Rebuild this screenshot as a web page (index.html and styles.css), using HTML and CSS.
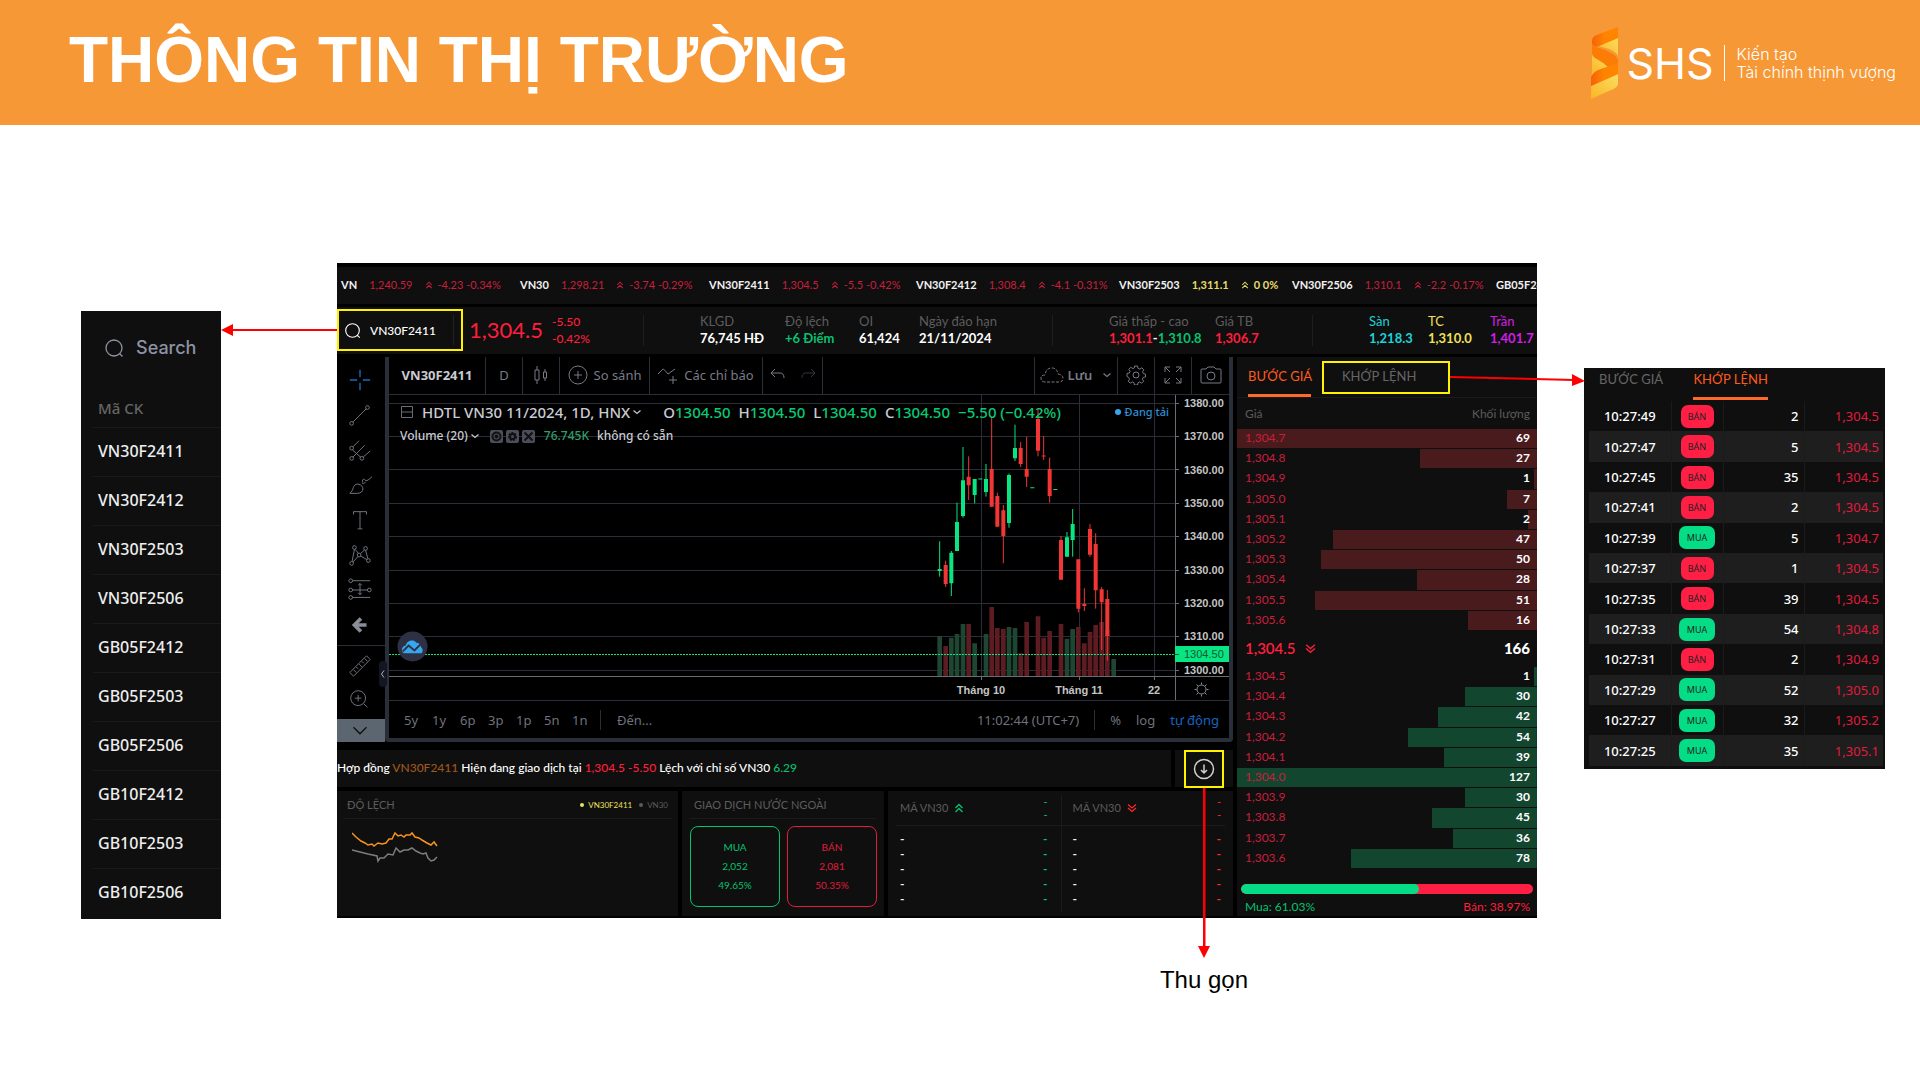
FILE: index.html
```html
<!DOCTYPE html>
<html lang="vi">
<head>
<meta charset="utf-8">
<title>Thông tin thị trường</title>
<meta name="viewport" content="width=device-width, initial-scale=1">
<link rel="stylesheet" href="styles.css">
</head>
<body>
<svg width="0" height="0" class="defs" aria-hidden="true">
  <symbol id="i-up" viewBox="0 0 10 10"><path d="M1.500 5L5 1.500L8.500 5M1.500 9L5 5.500L8.500 9" fill="none" stroke="currentColor" stroke-width="1.300"/></symbol>
  <symbol id="i-down" viewBox="0 0 10 10"><path d="M1 1.500L5 5L9 1.500M1 5L5 8.500L9 5" fill="none" stroke="currentColor" stroke-width="1.200"/></symbol>
  <symbol id="i-search" viewBox="0 0 20 20"><path d="M10 2a8 8 0 1 0 0 16a8 8 0 1 0 0-16M15.500 15.500L18.500 18.500" fill="none" stroke="currentColor" stroke-width="1.300"/></symbol>
  <symbol id="i-chev" viewBox="0 0 10 10"><path d="M1.500 3.500L5 6.500L8.500 3.500" fill="none" stroke="currentColor" stroke-width="1.200"/></symbol>
</svg>

<header class="banner">
  <h1>THÔNG TIN THỊ TRƯỜNG</h1>
  <div class="brand">
    <svg class="ribbon" viewBox="0 0 28 72" aria-hidden="true">
      <defs>
        <linearGradient id="g1" x1="0" x2="1"><stop offset="0" stop-color="#f4610a"/><stop offset=".5" stop-color="#ff8500"/></linearGradient>
        <linearGradient id="g2" x1="0" y1="1" x2="1" y2="0"><stop offset="0" stop-color="#fbb526"/><stop offset="1" stop-color="#fbdd5e"/></linearGradient>
      </defs>
      <path d="M8 19L27 11V29Q25 25 18 22Z" fill="url(#g2)"/>
      <path d="M1 27Q4 31 18 37L22 40L6 44Q2 46 1 50Z" fill="url(#g2)"/>
      <path d="M0 59L27 47V57Q26 61 20 63L0 72Z" fill="url(#g2)"/>
      <path d="M27 0V11L8 19Q2 21 1 17V14Q1 9 8 7Z" fill="url(#g1)"/>
      <path d="M1 16Q3 20 12 22L22 27Q28 31 27 36Q26 39 18 41Q12 35 4 31Q1 29 1 26Z" fill="#fb7d05"/>
      <path d="M0 59V51Q1 46 7 43L27 36V47Z" fill="url(#g1)"/>
    </svg>
    <span class="brand-name">SHS</span>
    <p class="brand-line">Kiến tạo<br>Tài chính thịnh vượng</p>
  </div>
</header>

<main class="stage">
  <aside class="symbols">
    <label class="find"><svg><use href="#i-search"/></svg><input type="text" placeholder="Search" aria-label="Search"></label>
    <table>
      <thead><tr><th>Mã CK</th></tr></thead>
      <tbody>
        <tr><td>VN30F2411</td></tr><tr><td>VN30F2412</td></tr><tr><td>VN30F2503</td></tr><tr><td>VN30F2506</td></tr>
        <tr><td>GB05F2412</td></tr><tr><td>GB05F2503</td></tr><tr><td>GB05F2506</td></tr>
        <tr><td>GB10F2412</td></tr><tr><td>GB10F2503</td></tr><tr><td>GB10F2506</td></tr>
      </tbody>
    </table>
  </aside>

  <section class="app">
    <div class="ticker">
      <div class="tick down"><b>VN</b><span>1,240.59</span><span><svg><use href="#i-up"/></svg>-4.23 -0.34%</span></div>
      <div class="tick down"><b>VN30</b><span>1,298.21</span><span><svg><use href="#i-up"/></svg>-3.74 -0.29%</span></div>
      <div class="tick down"><b>VN30F2411</b><span>1,304.5</span><span><svg><use href="#i-up"/></svg>-5.5 -0.42%</span></div>
      <div class="tick down"><b>VN30F2412</b><span>1,308.4</span><span><svg><use href="#i-up"/></svg>-4.1 -0.31%</span></div>
      <div class="tick flat"><b>VN30F2503</b><span>1,311.1</span><span><svg><use href="#i-up"/></svg>0 0%</span></div>
      <div class="tick down"><b>VN30F2506</b><span>1,310.1</span><span><svg><use href="#i-up"/></svg>-2.2 -0.17%</span></div>
      <div class="tick down"><b>GB05F2412</b></div>
    </div>

    <div class="quote">
      <div class="pick">
        <label class="pick-box"><svg><use href="#i-search"/></svg><input type="text" value="VN30F2411" aria-label="Mã hợp đồng"></label>
        <svg class="arrow-left" viewBox="0 0 116 12" aria-hidden="true"><path d="M10 5H116V7H10Z"/><path d="M0 6L12 0V12Z"/></svg>
      </div>
      <strong class="last">1,304.5</strong>
      <div class="pair red sm"><span>-5.50</span><span>-0.42%</span></div>
      <div class="pair rule"><span>KLGD</span><b>76,745 HĐ</b></div>
      <div class="pair green"><span>Độ lệch</span><b>+6 Điểm</b></div>
      <div class="pair"><span>OI</span><b>61,424</b></div>
      <div class="pair"><span>Ngày đáo hạn</span><b>21/11/2024</b></div>
      <div class="pair rule"><span>Giá thấp - cao</span><b><i class="c-red">1,301.1</i>-<i class="c-green">1,310.8</i></b></div>
      <div class="pair red"><span>Giá TB</span><b>1,306.7</b></div>
      <div class="pair rule cyan"><span>Sàn</span><b>1,218.3</b></div>
      <div class="pair yellow"><span>TC</span><b>1,310.0</b></div>
      <div class="pair violet"><span>Trần</span><b>1,401.7</b></div>
    </div>

    <div class="board">
      <div class="left">
        <div class="tv">
          <nav class="tools" aria-label="Công cụ vẽ">
            <button aria-label="Con trỏ"><svg class="blue" viewBox="0 0 28 28"><path d="M14 3v8M14 17v8M3 14h8M17 14h8"/></svg></button>
            <button aria-label="Đường xu hướng"><svg viewBox="0 0 28 28"><circle cx="5" cy="23" r="2"/><circle cx="22" cy="6" r="2"/><path d="M6.500 21.500L20.500 7.500"/></svg></button>
            <button aria-label="Gann"><svg viewBox="0 0 28 28"><circle cx="5" cy="12" r="2"/><circle cx="5" cy="23" r="2"/><circle cx="16" cy="23" r="2"/><path d="M6.500 10.500L13 4M6.500 21.500L19 9M17.500 21.500L25 15M6 14L15 22"/></svg></button>
            <button aria-label="Cọ vẽ"><svg viewBox="0 0 28 28"><path d="M3 23C8 20 5 13 12 13C19 14 19 23 11 23ZM17 11C16 9 17 7 19 8Q20 12 27 5M16 12Q18 13 20 11"/></svg></button>
            <button aria-label="Văn bản"><svg viewBox="0 0 28 28"><path d="M7 8V5H21V8M14 5V23M11.500 23.500H16.500"/></svg></button>
            <button aria-label="Mẫu hình"><svg viewBox="0 0 28 28"><circle cx="8" cy="6" r="2"/><circle cx="20" cy="7" r="2"/><circle cx="13" cy="14" r="2"/><circle cx="5" cy="23" r="2"/><circle cx="23" cy="20" r="2"/><path d="M5.500 21L8 8M9 8L12 12M14.500 12.500L19 8.500M20 9L22.500 18M14.500 15L21.500 19M6.500 21.500L12 15.500"/></svg></button>
            <button aria-label="Dự báo"><svg viewBox="0 0 28 28"><circle cx="4" cy="4" r="2"/><circle cx="4" cy="14" r="2"/><circle cx="24" cy="14" r="2"/><circle cx="4" cy="22" r="2"/><path d="M6 4H25M6 14H22M6 22H25M14 7V19M12 9L14 7L16 9M12 17L14 19L16 17"/></svg></button>
            <button aria-label="Mũi tên"><svg viewBox="0 0 28 28"><path class="fat" d="M21 14H9M15 7L8 14L15 21"/></svg></button>
            <hr>
            <button class="low" aria-label="Thước đo"><svg viewBox="0 0 28 28"><path d="M3 21L21 3L25 7L7 25ZM7 18l3 3M10 15l2 2M13 12l3 3M16 9l2 2M19 6l3 3"/></svg></button>
            <button class="low" aria-label="Phóng to"><svg viewBox="0 0 28 28"><circle cx="12" cy="12" r="8"/><path d="M12 8.500V15.500M8.500 12H15.500M18 18L22 22"/></svg></button>
            <button class="more" aria-label="Thêm"><svg viewBox="0 0 28 28"><path d="M7 10L14 17L21 10"/></svg></button>
            <button class="handle" aria-label="Thu gọn thanh"><svg viewBox="0 0 8 10"><path d="M5 1.500L2.500 5L5 8.500"/></svg></button>
          </nav>

          <div class="chart">
            <div class="bar">
              <button class="sym">VN30F2411</button>
              <button class="w37">D</button>
              <button class="w37" aria-label="Nến"><svg viewBox="0 0 20 20"><path d="M4 5H8V15H4ZM6 1V5M6 15V19M12.500 7H15.500V13H12.500ZM14 4V7M14 13V16"/></svg></button>
              <button class="w90"><svg viewBox="0 0 20 20"><circle cx="10" cy="10" r="9"/><path d="M10 6V14M6 10H14"/></svg>So sánh</button>
              <button class="w113"><svg viewBox="0 0 20 20"><path d="M0 9L5 4Q6 4 10 9L17 4M15 11V19M11 15H19"/></svg>Các chỉ báo</button>
              <button class="w30" aria-label="Hoàn tác"><svg viewBox="0 0 20 20"><path d="M7 4L3 8L7 12M3 8H12Q16 8 16 13"/></svg></button>
              <button class="w30 dim" aria-label="Làm lại"><svg viewBox="0 0 20 20"><path d="M13 4L17 8L13 12M17 8H8Q4 8 4 13"/></svg></button>
              <span class="fill"></span>
              <button class="w83"><svg class="wide" viewBox="0 0 24 18"><path stroke-dasharray="3 1.500" d="M5 16Q1 16 1 12Q1 9 5 9Q6 2 12 2Q17 2 18 8Q23 9 23 12Q23 16 19 16Z"/></svg><b>Lưu</b><svg class="tiny"><use href="#i-chev"/></svg></button>
              <button class="w37" aria-label="Cài đặt"><svg viewBox="0 0 20 20"><circle cx="10" cy="10" r="3"/><path d="M8.500 1h3l.5 2.300 1.800.8 2-1.300 2 2-1.300 2 .8 1.800 2.200.5v2.800l-2.300.5-.8 1.800 1.300 2-2 2-2-1.300-1.700.8-.5 2.300h-3l-.5-2.300-1.800-.8-2 1.300-2-2 1.300-2-.8-1.800L1 11.500v-3l2.300-.5.8-1.700-1.300-2 2-2 2 1.300 1.700-.8z"/></svg></button>
              <button class="w37" aria-label="Toàn màn hình"><svg viewBox="0 0 20 20"><path d="M2 7V2H7M2 2L7 7M13 2H18V7M18 2L13 7M2 13V18H7M2 18L7 13M18 13V18H13M18 18L13 13"/></svg></button>
              <button class="w37" aria-label="Chụp ảnh"><svg class="cam" viewBox="0 0 22 20"><path d="M1 5Q1 4 2 4H6L8 2H14L16 4H20Q21 4 21 5V17Q21 18 20 18H2Q1 18 1 17Z"/><circle cx="11" cy="11" r="4"/></svg></button>
            </div>

            <div class="plot">
              <svg class="candles" viewBox="0 0 840 306" role="img" aria-label="Biểu đồ nến VN30F2411">
                <path class="grid" d="M0 8.500H786M0 41.500H786M0 74.500H786M0 108.500H786M0 141.500H786M0 175.500H786M0 208.500H786M0 241.500H786M0 275.500H786M592.500 0V281M690.500 0V281M765.500 0V281"/>
                <path class="ticks" d="M0 281.500H840M786.500 0V306M786 8.500h4M786 41.500h4M786 74.500h4M786 108.500h4M786 141.500h4M786 175.500h4M786 208.500h4M786 241.500h4M786 275.500h4M592.500 281v4M690.500 281v4M765.500 281v4"/>
                <path class="grid" d="M0 305.500H840"/>
                <g transform="translate(511 -15) scale(.33333)">
                  <path class="vol vg" d="M119 768V888M154 773V888M171 762V888M189 732V888M224 790V888M258 762V888M327 741V888M345 744V888M501 776V888M518 747V888M641 837V888"/>
                  <path class="vol vr" d="M137 798V888M206 732V888M275 681V888M292 744V888M310 747V888M362 820V888M380 726V888M414 709V888M431 773V888M449 753V888M483 732V888M535 741V888M553 790V888M570 756V888M587 735V888M605 726V888M622 750V888"/>
                  <path class="wick cg" d="M119 484V590M154 513V648M171 368V513M189 201V413M224 297V370M258 252V350M327 281V443M345 134V243M501 456V530M518 387V530"/>
                  <path class="wick cr" d="M137 542V621M206 229V360M275 110V380M292 338V440M310 375V550M362 186V261M380 170V321M414 85V229M431 168V240M449 233V368M483 468V599M535 538V697M553 625V693M570 432V530M587 460V686M605 621V810M622 630V842"/>
                  <path class="body cg" d="M119 567V573M154 518V610M171 426V513M189 301V408M224 297V345M241 295.500V298.500M258 297V336M327 285V429M345 204V235M397 321.500V324.500M466 327V330M501 472V530M518 432V480"/>
                  <path class="body cr" d="M137 555V612M206 290V316M275 267V380M292 348V440M310 391V468M362 204V252M380 267V290M414 117V212M431 226.500V229.500M449 267V348M483 480V599M535 538V686M553 672V678M570 447V524M587 492V631M605 628V667M622 657V768"/>
                </g>
                <path class="lastline" d="M0 259.500H786"/>
                <rect x="786" y="251" width="54" height="16" fill="#09e581"/>
                <path d="M786 259.500h4" stroke="#063"/>
                <g class="axis">
                  <text x="795" y="12">1380.00</text><text x="795" y="45">1370.00</text><text x="795" y="79">1360.00</text><text x="795" y="112">1350.00</text><text x="795" y="145">1340.00</text><text x="795" y="179">1330.00</text><text x="795" y="212">1320.00</text><text x="795" y="245">1310.00</text><text x="795" y="279">1300.00</text>
                  <text class="now" x="795" y="263">1304.50</text>
                  <text class="mid" x="592" y="299">Tháng 10</text><text class="mid" x="690" y="299">Tháng 11</text><text class="mid" x="765" y="299">22</text>
                </g>
                <g fill="none" stroke="#8a8d98"><circle cx="812.500" cy="294.500" r="4.500"/><path d="M812.500 287.500v2M812.500 299.500v2M805.500 294.500h2M817.500 294.500h2M807.500 289.500l1.500 1.500M816 298l1.500 1.500M807.500 299.500l1.500-1.500M816 291l1.500-1.500"/></g>
              </svg>
              <div class="legend">
                <svg class="fold" viewBox="0 0 14 14"><path d="M1.500 1.500H12.500V12.500H1.500ZM1.500 7H12.500"/></svg>
                <span class="name">HDTL VN30 11/2024, 1D, HNX</span><svg class="tiny"><use href="#i-chev"/></svg>
                <span class="ohlc first">O<i>1304.50</i></span><span class="ohlc">H<i>1304.50</i></span><span class="ohlc">L<i>1304.50</i></span><span class="ohlc">C<i>1304.50</i></span><span class="ohlc"><i>−5.50 (−0.42%)</i></span>
              </div>
              <div class="legend study">
                <span>Volume (20)</span><svg class="tiny"><use href="#i-chev"/></svg>
                <button aria-label="Ẩn"><svg viewBox="0 0 13 13"><circle cx="6.500" cy="6.500" r="4"/><circle cx="6.500" cy="6.500" r="1"/></svg></button>
                <button aria-label="Định dạng"><svg viewBox="0 0 13 13"><circle cx="6.500" cy="6.500" r="3.500" stroke-dasharray="2 1"/><circle cx="6.500" cy="6.500" r="2.500"/></svg></button>
                <button aria-label="Xóa"><svg viewBox="0 0 13 13"><path d="M2.500 2.500L10.500 10.500M10.500 2.500L2.500 10.500"/></svg></button>
                <span class="vol-now">76.745K</span><span>không có sẵn</span>
              </div>
              <span class="loading">Đang tải</span>
              <svg class="cloud" viewBox="0 0 32 32" aria-hidden="true"><circle cx="16" cy="16" r="15.500" fill="#2e3144"/><path d="M6 22C4 19 6 15 9 15C10 10 17 8 20 12C23 12 24 14 25 17C27 18 27 22 25 23H8Q6 23 6 22Z" fill="#37a6ef"/><path d="M6 21L12 15L18 20L25 13" fill="none" stroke="#2e3144" stroke-width="2"/></svg>
            </div>

            <div class="foot">
              <button>5y</button><button>1y</button><button>6p</button><button>3p</button><button>1p</button><button>5n</button><button>1n</button>
              <button class="goto">Đến...</button>
              <span class="fill"></span>
              <span class="clock">11:02:44 (UTC+7)</span>
              <button class="opt">%</button><button class="opt">log</button><button class="opt on">tự động</button>
            </div>
          </div>
        </div>

        <div class="news">
          <p>Hợp đồng <span class="c-brown">VN30F2411</span> Hiện đang giao dịch tại <span class="c-red">1,304.5 -5.50</span> Lệch với chỉ số VN30 <span class="c-green">6.29</span></p>
          <div class="news-end">
            <button aria-label="Thu gọn"><svg viewBox="0 0 22 22"><circle cx="11" cy="11" r="9.500"/><path d="M11 6.500V15M8 12L11 15L14 12"/></svg></button>
            <div class="callout"><svg viewBox="0 0 12 170" aria-hidden="true"><path d="M5 0H7.500V160H5Z"/><path d="M0 158H12L6 170Z"/></svg><span>Thu gọn</span></div>
          </div>
        </div>

        <div class="panels">
          <section class="panel basis">
            <h2><span>ĐỘ LỆCH</span><span class="key k1">VN30F2411</span><span class="key k2">VN30</span></h2>
            <svg class="spark" viewBox="0 0 86 34" aria-hidden="true">
              <path stroke="#f7931e" d="M0 3L4 7L9 11L13 13L16 15L20 14L22 16L26 13L30 14L34 13L37 9L40 9L43 3L46 6L49 5L52 7L54 5L58 5L60 3L63 7L67 8L70 10L75 13L79 15L82 12L85 16"/>
              <path stroke="#7d7d7d" d="M0 20L8 22L16 24L25 26L26 31L28 28L32 28L36 24L41 25L44 18L48 22L52 20L56 20L60 18L64 21L68 23L71 24L74 23L76 28L79 31L82 30L85 27"/>
            </svg>
          </section>
          <section class="panel foreign">
            <h2>GIAO DỊCH NƯỚC NGOÀI</h2>
            <div class="boxes">
              <div class="box buy"><span>MUA</span><span>2,052</span><span>49.65%</span></div>
              <div class="box sell"><span>BÁN</span><span>2,081</span><span>50.35%</span></div>
            </div>
          </section>
          <section class="panel movers">
            <div class="mover up">
              <h2>MÃ VN30 <svg><use href="#i-up"/></svg><span class="stack"><i>-</i><i>-</i></span></h2>
              <ul><li>-<i>-</i></li><li>-<i>-</i></li><li>-<i>-</i></li><li>-<i>-</i></li><li>-<i>-</i></li></ul>
            </div>
            <div class="mover dn">
              <h2>MÃ VN30 <svg><use href="#i-down"/></svg><span class="stack"><i>-</i><i>-</i></span></h2>
              <ul><li>-<i>-</i></li><li>-<i>-</i></li><li>-<i>-</i></li><li>-<i>-</i></li><li>-<i>-</i></li></ul>
            </div>
          </section>
        </div>
      </div>

      <section class="book">
        <div class="tabs">
          <button class="tab on">BƯỚC GIÁ</button>
          <button class="tab marked">KHỚP LỆNH</button>
          <svg class="arrow-right" viewBox="0 0 136 14" aria-hidden="true"><path d="M0 3L124 6V8L0 5Z"/><path d="M122 1L135 8L122 13Z"/></svg>
        </div>
        <div class="book-head"><span>Giá</span><span>Khối lượng</span></div>
        <table class="asks">
          <tr style="--w:100%"><td>1,304.7</td><td>69</td></tr>
          <tr style="--w:39%"><td>1,304.8</td><td>27</td></tr>
          <tr style="--w:1%"><td>1,304.9</td><td>1</td></tr>
          <tr style="--w:10%"><td>1,305.0</td><td>7</td></tr>
          <tr style="--w:3%"><td>1,305.1</td><td>2</td></tr>
          <tr style="--w:68%"><td>1,305.2</td><td>47</td></tr>
          <tr style="--w:72%"><td>1,305.3</td><td>50</td></tr>
          <tr style="--w:40%"><td>1,305.4</td><td>28</td></tr>
          <tr style="--w:74%"><td>1,305.5</td><td>51</td></tr>
          <tr style="--w:23%"><td>1,305.6</td><td>16</td></tr>
        </table>
        <div class="book-mid"><span>1,304.5</span><svg><use href="#i-down"/></svg><b>166</b></div>
        <table class="bids">
          <tr style="--w:1%"><td>1,304.5</td><td>1</td></tr>
          <tr style="--w:24%"><td>1,304.4</td><td>30</td></tr>
          <tr style="--w:33%"><td>1,304.3</td><td>42</td></tr>
          <tr style="--w:43%"><td>1,304.2</td><td>54</td></tr>
          <tr style="--w:31%"><td>1,304.1</td><td>39</td></tr>
          <tr style="--w:100%"><td>1,304.0</td><td>127</td></tr>
          <tr style="--w:24%"><td>1,303.9</td><td>30</td></tr>
          <tr style="--w:35%"><td>1,303.8</td><td>45</td></tr>
          <tr style="--w:28%"><td>1,303.7</td><td>36</td></tr>
          <tr style="--w:62%"><td>1,303.6</td><td>78</td></tr>
        </table>
        <div class="ratio"><div style="width:61.03%"></div></div>
        <div class="ratio-text"><span class="c-green">Mua: 61.03%</span><span class="c-red">Bán: 38.97%</span></div>
      </section>
    </div>
  </section>

  <section class="trades">
    <div class="tabs">
      <button class="tab">BƯỚC GIÁ</button>
      <button class="tab on">KHỚP LỆNH</button>
    </div>
    <table>
      <tr><td>10:27:49</td><td><mark class="s">BÁN</mark></td><td>2</td><td>1,304.5</td></tr>
      <tr><td>10:27:47</td><td><mark class="s">BÁN</mark></td><td>5</td><td>1,304.5</td></tr>
      <tr><td>10:27:45</td><td><mark class="s">BÁN</mark></td><td>35</td><td>1,304.5</td></tr>
      <tr><td>10:27:41</td><td><mark class="s">BÁN</mark></td><td>2</td><td>1,304.5</td></tr>
      <tr><td>10:27:39</td><td><mark class="b">MUA</mark></td><td>5</td><td>1,304.7</td></tr>
      <tr><td>10:27:37</td><td><mark class="s">BÁN</mark></td><td>1</td><td>1,304.5</td></tr>
      <tr><td>10:27:35</td><td><mark class="s">BÁN</mark></td><td>39</td><td>1,304.5</td></tr>
      <tr><td>10:27:33</td><td><mark class="b">MUA</mark></td><td>54</td><td>1,304.8</td></tr>
      <tr><td>10:27:31</td><td><mark class="s">BÁN</mark></td><td>2</td><td>1,304.9</td></tr>
      <tr><td>10:27:29</td><td><mark class="b">MUA</mark></td><td>52</td><td>1,305.0</td></tr>
      <tr><td>10:27:27</td><td><mark class="b">MUA</mark></td><td>32</td><td>1,305.2</td></tr>
      <tr><td>10:27:25</td><td><mark class="b">MUA</mark></td><td>35</td><td>1,305.1</td></tr>
    </table>
  </section>
</main>
</body>
</html>
```
FILE: styles.css
```css
* { box-sizing: border-box; }
body, h1, h2, p, ul { margin: 0; padding: 0; }
body { background: #fff; font-family: "Lato", "Noto Sans", sans-serif; color: #f2f2f2; }
button, input { font: inherit; color: inherit; background: none; border: 0; padding: 0; margin: 0; }
i { font-style: normal; }
svg { flex: none; display: block; }
ul { list-style: none; }
table { border-collapse: collapse; width: 100%; }
td, th { padding: 0; }
.defs { position: absolute; }
.c-red { color: #ff1e3c; }
.c-green { color: #06c270; }
.c-brown { color: #a0571a; }
.fill { flex: 1; }

/* banner */
.banner { display: flex; justify-content: space-between; height: 125px; padding: 0 24px 0 69px; background: #f79837; }
.banner h1 { font: bold 64px/120px "Liberation Sans", sans-serif; color: #fff; white-space: nowrap; }
.brand { display: flex; align-items: center; height: 125px; color: #fff; font-family: "Inter", sans-serif; }
.ribbon { width: 28px; height: 72px; }
.brand-name { margin-left: 7px; font-size: 43px; line-height: 72px; font-weight: 400; }
.brand-line { margin-left: 10px; padding-left: 12px; border-left: 1px solid #fff; font-size: 16px; line-height: 18px; font-weight: 300; white-space: nowrap; }

/* stage */
.stage { display: grid; grid-template-columns: 140px minmax(0, 1fr) 301px; padding: 138px 35px 162px 81px; align-items: start; }

/* symbol list */
.symbols { margin-top: 48px; background: #0f0f0f; font-family: "Noto Sans", sans-serif; padding-bottom: 2px; }
.find { display: flex; align-items: center; gap: 12px; height: 74px; padding-left: 23px; color: #8d93a3; }
.find svg { width: 20px; height: 20px; }
.find input { width: 70px; font: 500 18px/24px "Inter", sans-serif; }
.find input::placeholder { color: #8d93a3; opacity: 1; }
.symbols table { width: 128px; margin-left: 12px; }
.symbols th { height: 42px; padding: 4px 0 0 5px; text-align: left; font-size: 15px; line-height: 20px; font-weight: 500; color: #666; }
.symbols td { height: 49px; padding: 0 0 2px 5px; border-top: 1px solid #1a1a1a; font-size: 16px; line-height: 22px; font-weight: 500; color: #eee; }

/* trading app */
.app { margin: 0 47px 0 116px; background: #000; padding: 4px 0 2px; }
.ticker { display: grid; grid-template-columns: 179fr 189fr 207fr 203fr 173fr 204fr 41fr; height: 37px; padding-left: 4px; background: #0f0f0f; overflow: hidden; font-size: 11px; line-height: 36px; white-space: nowrap; }
.tick { display: flex; gap: 12px; min-width: 0; }
.tick span { display: flex; align-items: center; gap: 5px; height: 36px; }
.tick svg { width: 8px; height: 8px; }
.tick.down span { color: #c81f3c; }
.tick.flat span { color: #e8dc6a; font-weight: 700; }

.quote { display: grid; grid-template-columns: 132fr 83fr 91fr 142fr 74fr 60fr 133fr 163fr 97fr 116fr 62fr 47fr; height: 47px; margin: 3px 0; background: #0f0f0f; white-space: nowrap; }
.pick { position: relative; padding: 2px 6px 2px 0; }
.pick-box { display: flex; align-items: center; gap: 9px; height: 42px; padding-left: 5px; border: 2px solid #fff200; color: #fff; font-size: 12px; }
.pick-box svg { width: 17px; height: 17px; }
.pick-box input { width: 84px; border-right: 1px solid #222; height: 30px; font-weight: 500; }
.arrow-left { position: absolute; right: 100%; top: 17px; width: 116px; height: 12px; fill: #f00; }
.last { font-size: 22px; line-height: 45px; font-weight: 400; color: #ff1e3c; }
.pair { display: flex; flex-direction: column; justify-content: center; min-width: 0; padding-bottom: 2px; font-size: 13px; line-height: 17px; color: #5c5c5c; }
.pair b { color: #fff; font-weight: 700; }
.pair.sm { font-size: 12px; font-weight: 500; color: #ff1e3c; }
.pair.rule { align-items: flex-start; padding-left: 57px; background: linear-gradient(#1d1d1d, #1d1d1d) 0 8px / 1px 31px no-repeat; }
.pair.green b { color: #06c270; }
.pair.red b { color: #ff1e3c; }
.pair.cyan, .pair.cyan b { color: #1bd3d8; }
.pair.yellow, .pair.yellow b { color: #f0e05a; }
.pair.violet, .pair.violet b { color: #d51de8; }

.board { display: grid; grid-template-columns: minmax(0, 1fr) 300px; gap: 4px; }
.left { min-width: 0; }

/* chart */
.tv { display: flex; font-family: "Noto Sans", sans-serif; }
.tools { position: relative; width: 48px; display: flex; flex-direction: column; padding-top: 5px; }
.tools button { display: flex; justify-content: center; align-items: center; height: 35px; padding-right: 2px; }
.tools .low { height: 34px; }
.tools svg { width: 26px; height: 26px; fill: none; stroke: #787b86; }
.tools svg.blue { stroke: #1c69b8; stroke-width: 1.5; }
.tools .fat { stroke-width: 4; stroke: #8a8d98; }
.tools hr { width: 100%; height: 1px; margin: 3px 0; border: 0; background: #2a2e39; }
.tools .more { height: 23px; margin-top: auto; background: #5b6670; }
.tools .more svg { stroke: #111; stroke-width: 1.5; }
.tools .handle { position: absolute; right: -2px; top: 304px; width: 8px; height: 26px; padding: 0; border-radius: 4px; background: #131722; }
.tools .handle svg { width: 8px; height: 10px; stroke: #b0b3bd; }

.chart { flex: 1; min-width: 0; border: solid #2a2e39; border-width: 0 4px 4px 4px; border-radius: 0 0 4px 4px; }
.bar { display: flex; height: 38px; border-bottom: 1px solid #2a2e39; font-size: 13px; color: #787b86; }
.bar button { display: flex; align-items: center; justify-content: center; gap: 6px; padding-bottom: 1px; white-space: nowrap; }
.bar svg { width: 20px; height: 20px; fill: none; stroke: currentColor; }
.bar .sym { width: 97px; color: #c9cbd2; font-weight: 700; border-right: 1px solid #2a2e39; }
.bar .w37 { width: 37px; border-right: 1px solid #2a2e39; }
.bar .w90 { width: 90px; border-right: 1px solid #2a2e39; }
.bar .w113 { width: 113px; border-right: 1px solid #2a2e39; }
.bar .w30 { width: 30px; }
.bar .w30.dim { color: #33363f; border-right: 1px solid #2a2e39; }
.bar .w83 { width: 84px; gap: 4px; border: solid #2a2e39; border-width: 0 1px; }
.bar .w83 b { font-weight: 600; }
.bar .w83 .tiny { margin-left: 6px; }
.bar .w37:last-child { border: 0; }
.bar svg.wide { width: 24px; height: 18px; }
.bar svg.cam { width: 22px; }
svg.tiny, .bar svg.tiny, .legend svg.tiny { width: 10px; height: 10px; }

.plot { position: relative; }
.candles { width: 100%; height: auto; }
.candles .grid { fill: none; stroke: #2a2e39; }
.candles .ticks { fill: none; stroke: #6b6d74; }
.vol { stroke-width: 14; }
.vg { stroke: #1e4632; }
.vr { stroke: #5c1c21; }
.wick { stroke-width: 3; }
.body { stroke-width: 12; }
.cg { stroke: #09e581; }
.cr { stroke: #f23636; }
.lastline { stroke: #09e581; stroke-dasharray: 2 1; }
.axis { font: bold 11px "Liberation Sans", sans-serif; fill: #c4c4c4; }
.axis .now { fill: #0a5a38; font-weight: normal; }
.axis .mid { text-anchor: middle; }
.legend { position: absolute; left: 11px; top: 6px; display: flex; align-items: center; font-size: 15px; line-height: 22px; font-weight: 500; color: #c9cbd2; white-space: nowrap; }
.legend svg { width: 14px; height: 14px; fill: none; stroke: #c9cbd2; }
.legend .fold { margin-right: 8px; stroke: #6b6d74; }
.legend .tiny { margin-left: 2px; }
.ohlc { margin-left: 8px; }
.ohlc.first { margin-left: 21px; }
.ohlc i, .vol-now { color: #09c975; }
.study { top: 31px; font-size: 12px; line-height: 20px; }
.study button { margin-left: 3px; width: 13px; height: 13px; background: #4b4d5a; border-radius: 2px; }
.study svg.tiny + button { margin-left: 10px; }
.study button svg { width: 13px; height: 13px; stroke: #111; stroke-width: 2; }
.study .vol-now { margin: 0 8px 0 9px; color: #2f9e6a; }
.loading { position: absolute; right: 60px; top: 8px; font-size: 11px; line-height: 18px; font-weight: 500; color: #2d8fd6; }
.loading::before { content: ""; display: inline-block; width: 6px; height: 6px; margin-right: 4px; border-radius: 50%; background: #37a6ef; vertical-align: 1px; }
.cloud { position: absolute; left: 8px; bottom: 39px; width: 31px; height: 31px; }

.foot { display: flex; align-items: center; height: 37px; padding: 0 10px 0 15px; font-size: 13px; color: #6f727c; white-space: nowrap; }
.foot button { width: 28px; text-align: left; }
.foot .goto { width: auto; padding-left: 16px; border-left: 1px solid #2a2e39; line-height: 20px; }
.foot .clock { padding-right: 15px; border-right: 1px solid #2a2e39; line-height: 20px; }
.foot .opt { width: auto; margin-left: 15px; }
.foot .on { color: #1665c0; }

/* news line */
.news { display: flex; gap: 4px; height: 37px; margin: 8px 0 4px; font-size: 12px; line-height: 35px; font-weight: 500; color: #fff; }
.news p { flex: 1; min-width: 0; overflow: hidden; background: #0f0f0f; white-space: nowrap; }
.news-end { position: relative; width: 58px; display: flex; justify-content: center; background: #0f0f0f; }
.news-end button { display: flex; align-items: center; justify-content: center; width: 40px; height: 38px; border: 2px solid #fff200; }
.news-end button svg { width: 22px; height: 22px; fill: none; stroke: #d0d0d0; stroke-width: 1.5; }
.callout { position: absolute; z-index: 2; top: 38px; left: 50%; display: flex; flex-direction: column; align-items: center; width: 120px; margin-left: -60px; }
.callout svg { width: 12px; height: 170px; fill: #f00; }
.callout span { font: 24px/28px "Liberation Sans", sans-serif; color: #000; margin-top: 8px; }

/* panels */
.panels { display: grid; grid-template-columns: 341fr 202fr 345fr; gap: 4px; height: 125px; }
.panel { min-width: 0; background: #0f0f0f; }
.panel h2 { display: flex; align-items: center; height: 28px; font-size: 11px; line-height: 14px; font-weight: 400; color: #5c5c5c; white-space: nowrap; }
.basis { padding: 0 6px; }
.basis h2 { padding: 0 4px; border-bottom: 1px solid #1b1b1b; gap: 7px; }
.basis h2 .key { font-size: 8px; }
.key::before { content: ""; display: inline-block; width: 4px; height: 4px; margin-right: 4px; border-radius: 50%; background: currentColor; vertical-align: 1px; }
.key.k1 { margin-left: auto; color: #f0e05a; }
.spark { width: 86px; height: 34px; margin: 11px 0 0 9px; fill: none; stroke-width: 1.5; }
.foreign { padding: 0 8px; }
.foreign h2 { padding: 0 4px; border-bottom: 1px solid #1b1b1b; }
.boxes { display: grid; grid-template-columns: 1fr 1fr; gap: 7px; padding: 7px 0; margin-right: -1px; }
.box { display: flex; flex-direction: column; align-items: center; justify-content: center; height: 81px; border: 1px solid currentColor; border-radius: 8px; font-size: 10px; line-height: 19px; }
.buy { color: #06c270; }
.sell { color: #e01c3c; }
.movers { display: grid; grid-template-columns: 1fr 1fr; padding: 4px 8px; }
.mover + .mover { border-left: 1px solid #1b1b1b; }
.mover h2 { height: 31px; padding: 0 13px 4px 4px; gap: 6px; border-bottom: 1px solid #1b1b1b; }
.mover + .mover h2 { padding: 0 4px 4px 11px; }
.mover h2 svg { width: 10px; height: 10px; }
.stack { margin-left: auto; display: flex; flex-direction: column; line-height: 13px; }
.mover ul { padding: 6px 13px 0 4px; font-size: 12px; line-height: 14px; font-weight: 700; }
.mover + .mover ul { padding: 6px 4px 0 11px; }
.mover li { display: flex; justify-content: space-between; height: 15px; }
.up i, .up svg { color: #06c270; }
.dn i, .dn svg { color: #ff2a2a; }

/* tabs */
.tabs { display: flex; font-size: 13px; line-height: 18px; color: #666; white-space: nowrap; }
.tab.on { color: #ff5a1f; border-bottom: 3px solid #ff6a2b; }

/* order book */
.book { display: flex; flex-direction: column; background: #0f0f0f; font-size: 12px; }
.book .tabs { position: relative; height: 41px; padding: 0 11px; gap: 11px; border-bottom: 1px solid #1b1b1b; }
.book .tab.on { width: 63px; padding: 0; height: 40px; }
.book .marked { width: 128px; height: 33px; margin-top: 4px; padding: 0 0 3px 18px; border: 2px solid #fff200; text-align: left; }
.arrow-right { position: absolute; left: 213px; top: 16px; width: 136px; height: 14px; fill: #f00; }
.book-head { display: flex; justify-content: space-between; padding: 0 7px 0 8px; height: 31px; line-height: 31px; color: #5c5c5c; }
.book table { height: 202px; }
.book tr { background: linear-gradient(var(--bar), var(--bar)) right / var(--w) 100% no-repeat; }
.book td { border-bottom: 1px solid #0f0f0f; line-height: 17px; padding: 0 0 2px 8px; color: #c81f3c; }
.book td:last-child { padding-right: 7px; text-align: right; font-weight: 700; color: #fff; }
.asks { --bar: #4a1b1d; }
.bids { --bar: #13462f; }
.book-mid { display: flex; align-items: center; gap: 9px; height: 36px; padding: 0 7px 2px 8px; font-size: 15px; font-weight: 600; color: #ff1e3c; }
.book-mid svg { width: 11px; height: 11px; }
.book-mid b { margin-left: auto; color: #fff; }
.ratio { height: 10px; margin: 15px 4px 4px; border-radius: 5px; background: #ff1f44; overflow: hidden; }
.ratio div { height: 10px; border-radius: 5px; background: #04dd86; }
.ratio-text { display: flex; justify-content: space-between; padding: 0 7px 0 8px; line-height: 18px; }

/* trades */
.trades { margin-top: 105px; padding: 0 2px 3px 5px; background: #0f0f0f; font-family: "Noto Sans", sans-serif; }
.trades .tabs { height: 33px; padding-left: 10px; gap: 30px; font-family: "Lato", "Noto Sans", sans-serif; }
.trades .tab { height: 32px; padding-bottom: 11px; }
.trades .tab.on { width: 75px; padding-bottom: 8px; }
.trades table { table-layout: fixed; height: 365px; }
.trades td { border-right: 1px solid #1b1b1b; font-size: 13px; line-height: 18px; font-weight: 500; color: #fff; text-align: right; padding: 0 5px; }
.trades tr:nth-child(even) { background: #1e1e1e; }
.trades td:nth-child(1) { width: 82px; text-align: center; }
.trades td:nth-child(2) { width: 52px; text-align: center; padding: 0; }
.trades td:nth-child(3) { width: 81px; }
.trades td:nth-child(4) { color: #e01c3c; font-weight: 400; border: 0; padding-right: 4px; }
.trades mark { display: inline-block; width: 33px; height: 23px; border-radius: 7px; font-size: 9px; line-height: 23px; font-weight: 400; color: #222; }
.trades mark.s { background: #ff1f44; }
.trades mark.b { width: 36px; background: #04dd86; }
```
